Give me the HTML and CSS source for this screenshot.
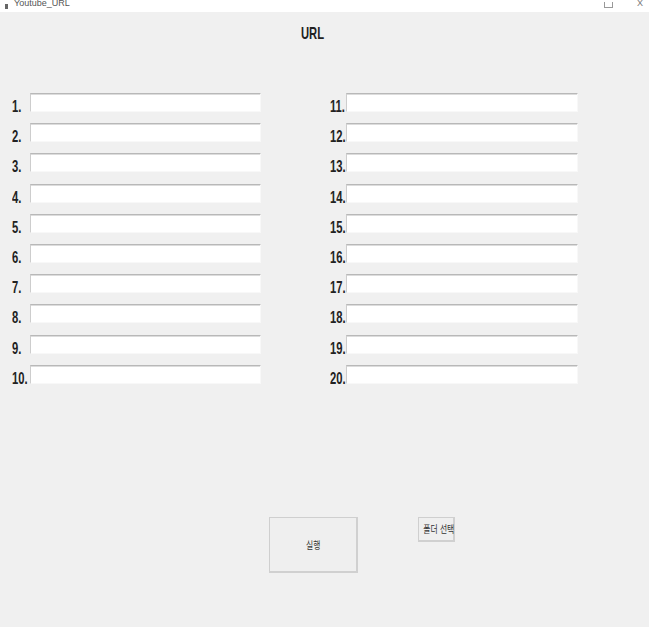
FILE: index.html
```html
<!DOCTYPE html>
<html lang="ko">

<head>
  <meta charset="UTF-8">
  <meta name="viewport" content="width=device-width, initial-scale=1.0">
  <title>Youtube_URL</title>
  <link rel="stylesheet" href="styles.css">
</head>

<body>
  <div class="title-bar">
    <span class="app-icon"></span>
    <span class="app-name">Youtube_URL</span>
    <span class="win-controls">
      <span class="win-max"></span>
      <span class="win-close">X</span>
    </span>
  </div>

  <div class="main-container">
    <h1 class="heading"><span class="narrow">URL</span></h1>

    <div class="url-columns">
      <div class="url-column left" id="col-left"></div>
      <div class="url-column right" id="col-right"></div>
    </div>

    <div class="button-row">
      <button class="run-button"><span class="narrow-kr">실행</span></button>
      <button class="folder-button"><span class="narrow-kr">폴더 선택</span></button>
    </div>
  </div>

  <script>
    function buildColumn(id, start) {
      let html = "";
      for (let i = start; i < start + 10; i++) {
        html += `
          <div class="url-row">
            <label class="url-label" for="url-${i}"><span class="narrow">${i}.</span></label>
            <input type="text" class="url-input" id="url-${i}">
          </div>
        `;
      }
      document.getElementById(id).innerHTML = html;
    }

    buildColumn("col-left", 1);
    buildColumn("col-right", 11);
  </script>
</body>

</html>
```

FILE: styles.css
```css
body {
  margin: 0;
  padding: 0;
  width: 649px;
  height: 627px;
  overflow: hidden;
  background-color: #f0f0f0;
  font-family: "Liberation Sans", sans-serif;
}

.narrow {
  display: inline-block;
  transform: scaleX(0.66);
  transform-origin: left center;
  white-space: nowrap;
}

.narrow-kr {
  display: inline-block;
  transform: scaleX(0.78);
  white-space: nowrap;
}

.title-bar {
  height: 12px;
  background-color: #ffffff;
  display: flex;
  align-items: flex-end;
  overflow: hidden;
  font-size: 9px;
  color: #555555;
  line-height: 9px;
}

.app-icon {
  width: 3px;
  height: 5px;
  margin: 0 6px 3px 5px;
  background-color: #666666;
}

.app-name {
  margin-bottom: 4px;
}

.win-controls {
  margin-left: auto;
  display: flex;
  align-items: flex-end;
  gap: 24px;
  margin-right: 6px;
  margin-bottom: 4px;
}

.win-max {
  width: 7px;
  height: 5px;
  border: 1px solid #999999;
  border-top: none;
}

.win-close {
  color: #777777;
}

.main-container {
  display: flex;
  flex-direction: column;
}

.heading {
  margin: 12px 0 0 0;
  padding-left: 301px;
  font-size: 17px;
  font-weight: bold;
  color: #222222;
  height: 19px;
  line-height: 19px;
}

.url-columns {
  display: flex;
  margin-top: 50px;
  padding-left: 12px;
  gap: 69px;
}

.url-column {
  display: flex;
  flex-direction: column;
  gap: 11.2px;
}

.url-row {
  display: flex;
  align-items: flex-end;
  height: 19px;
}

.url-label {
  font-size: 17px;
  font-weight: bold;
  color: #222222;
  line-height: 15px;
  margin-bottom: -2px;
  white-space: nowrap;
}

.left .url-label {
  width: 18px;
}

.right .url-label {
  width: 16px;
}

.url-input {
  box-sizing: border-box;
  height: 19px;
  margin: 0;
  padding: 0;
  background-color: #ffffff;
  border: 1px solid #f8f8f8;
  border-top: 1px solid #b8b8b8;
  border-left: 1px solid #cdcdcd;
  box-shadow: inset 0 1px 0 #dcdcdc;
  outline: none;
}

.left .url-input {
  width: 231px;
}

.right .url-input {
  width: 232px;
}

.button-row {
  display: flex;
  align-items: flex-start;
  margin-top: 133px;
  padding-left: 269px;
  gap: 60px;
}

.button-row button {
  box-sizing: border-box;
  margin: 0;
  padding: 0;
  background-color: #efefef;
  border: 1px solid #cfcfcf;
  border-right: 2px solid #d0d0d0;
  border-bottom: 2px solid #d0d0d0;
  color: #333333;
  font-family: "Noto Sans CJK KR", sans-serif;
  font-size: 10px;
}

.run-button {
  width: 89px;
  height: 56px;
}

.folder-button {
  width: 37px;
  height: 25px;
  margin-top: 1px;
  white-space: nowrap;
}
```
